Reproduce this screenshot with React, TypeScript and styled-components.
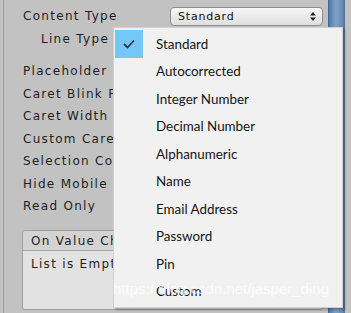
import React from "react";
import styled, { createGlobalStyle } from "styled-components";

const GlobalStyle = createGlobalStyle`
  html, body { margin: 0; padding: 0; background: #c2c2c2; overflow: hidden; }
  #root { width: 351px; height: 313px; }
`;

const Page = styled.div`
  position: relative;
  width: 351px;
  height: 313px;
  display: flex;
  background: #c2c2c2;
  overflow: hidden;
`;

const Inspector = styled.div`
  flex: 1;
  margin-left: 3px;
  border-left: 1px solid #9a9a9a;
  padding-top: 5px;
  display: flex;
  flex-direction: column;
  font-family: "DejaVu Sans", Verdana, sans-serif;
  font-size: 12px;
  letter-spacing: 1.3px;
  color: #1e1e1e;
`;

const Row = styled.div<{ $indent?: number }>`
  height: 22.5px;
  display: flex;
  align-items: center;
  padding-left: ${(p) => 19 + (p.$indent ?? 0)}px;
  white-space: nowrap;
`;

const Label = styled.span<{ $w?: number }>`
  width: ${(p) => p.$w ?? 147}px;
  flex: none;
`;

const Gap = styled.div<{ $h: number }>`
  height: ${(p) => p.$h}px;
  flex: none;
`;

const DropField = styled.div`
  width: 153px;
  height: 19px;
  box-sizing: border-box;
  border: 1px solid #8c8c8c;
  border-radius: 4px;
  background: linear-gradient(#f7f7f7, #dedede);
  display: flex;
  align-items: center;
  justify-content: space-between;
  padding: 0 6px 0 7px;
  font-size: 11px;
  letter-spacing: 0.8px;
  color: #111;
`;

const EventBox = styled.div`
  margin: 12.5px 5px 0 18px;
  border: 1px solid #9e9e9e;
  border-radius: 3px;
  overflow: hidden;
  display: flex;
  flex-direction: column;
`;

const EventHeader = styled.div`
  height: 19px;
  background: #d3d3d3;
  border-bottom: 1px solid #a8a8a8;
  display: flex;
  align-items: center;
  padding-left: 8px;
  white-space: nowrap;
`;

const EventBody = styled.div`
  height: 58px;
  background: #e2e2e2;
  padding: 6px 0 0 8px;
  box-sizing: border-box;
  white-space: nowrap;
`;

const ScrollBar = styled.div`
  width: 17px;
  flex: none;
  background: linear-gradient(90deg, #3f6590 0, #5a81ad 2px, #7fa1c8 8px, #6a8cb4 14px, #4c6e96 17px);
`;

const Gutter = styled.div`
  width: 6px;
  flex: none;
  background: #c2c2c2;
`;

const Popup = styled.div`
  position: absolute;
  left: 113px;
  top: 27px;
  width: 230px;
  padding: 2px 0;
  background: #f1f1f1;
  border: 1px solid #d0d0d0;
  box-sizing: border-box;
  box-shadow: 2px 2px 2px rgba(0, 0, 0, 0.25);
  font-family: Lato, "Noto Sans", sans-serif;
  font-size: 13.4px;
  color: #141414;
`;

const Item = styled.div`
  height: 27.5px;
  display: flex;
  align-items: center;
`;

const CheckCell = styled.div`
  width: 42px;
  flex: none;
  height: 100%;
  display: flex;
  align-items: center;
  padding-left: 1px;
  box-sizing: border-box;
`;

const CheckBox = styled.div`
  width: 28px;
  height: 28px;
  background: #74c8f8;
  display: flex;
  align-items: center;
  justify-content: center;
`;

const Watermark = styled.div`
  position: absolute;
  left: 113px;
  top: 280px;
  font-family: "Liberation Sans", Arial, sans-serif;
  font-size: 15px;
  color: rgba(255, 255, 255, 0.75);
  white-space: nowrap;
  pointer-events: none;
`;

const items = [
  "Standard",
  "Autocorrected",
  "Integer Number",
  "Decimal Number",
  "Alphanumeric",
  "Name",
  "Email Address",
  "Password",
  "Pin",
  "Custom",
];

const labels = [
  "Placeholder",
  "Caret Blink Rate",
  "Caret Width",
  "Custom Caret Color",
  "Selection Color",
  "Hide Mobile Input",
  "Read Only",
];

export default function App() {
  return (
    <>
      <GlobalStyle />
      <Page>
        <Inspector>
          <Row>
            <Label>Content Type</Label>
            <DropField>
              <span>Standard</span>
              <svg width="6" height="9" viewBox="0 0 6 9">
                <path d="M3 0 L6 3.5 H0 Z M3 9 L6 5.5 H0 Z" fill="#222" />
              </svg>
            </DropField>
          </Row>
          <Row $indent={18}>
            <Label $w={129}>Line Type</Label>
          </Row>
          <Gap $h={10} />
          {labels.map((l) => (
            <Row key={l}>
              <Label>{l}</Label>
            </Row>
          ))}
          <EventBox>
            <EventHeader>On Value Changed (String)</EventHeader>
            <EventBody>List is Empty</EventBody>
          </EventBox>
        </Inspector>
        <ScrollBar />
        <Gutter />
        <Popup>
          {items.map((it, i) => (
            <Item key={it}>
              <CheckCell>
                {i === 0 && (
                  <CheckBox>
                    <svg width="12" height="10" viewBox="0 0 12 10">
                      <path d="M1 5 L4.5 8.5 L11 1.5" fill="none" stroke="#2b3a44" strokeWidth="1.8" />
                    </svg>
                  </CheckBox>
                )}
              </CheckCell>
              <span>{it}</span>
            </Item>
          ))}
        </Popup>
        <Watermark>https://blog.csdn.net/jasper_ding</Watermark>
      </Page>
    </>
  );
}
